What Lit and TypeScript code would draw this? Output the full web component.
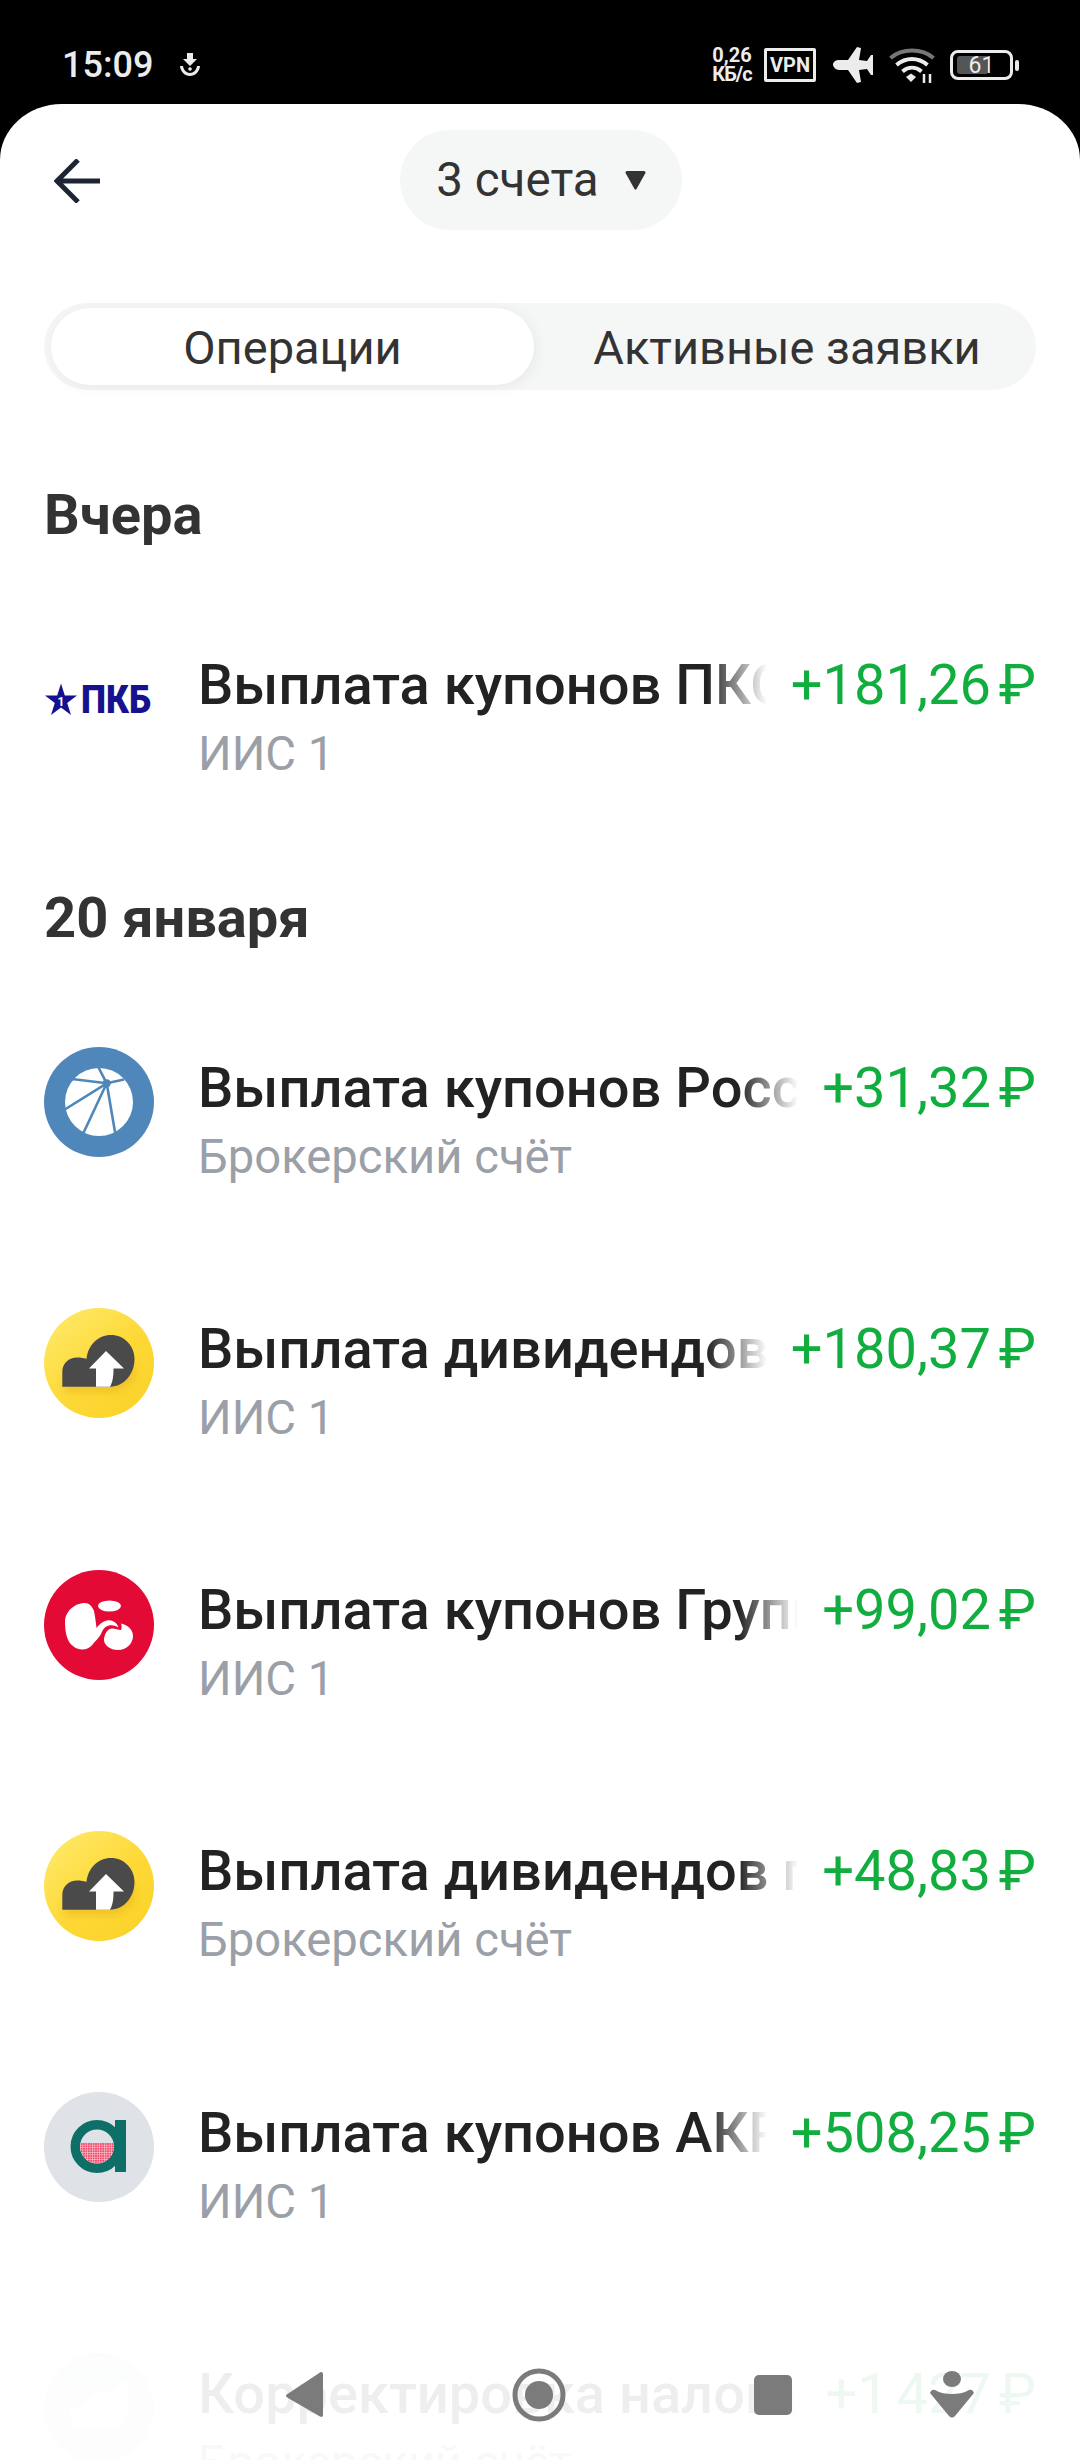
import { LitElement, html, css, svg } from "lit";
import { customElement } from "lit/decorators.js";

const rosseti = svg`<svg viewBox="0 0 110 110" class="logo"><circle cx="55" cy="55" r="55" fill="#5087bb"/><circle cx="55" cy="55" r="34" fill="#fff"/><g stroke="#5087bb" stroke-width="2.6" fill="none"><path d="M62.7 36.3 54.3 20M62.7 36.3 28 32M62.7 36.3 20 63M62.7 36.3 38.5 88M62.7 36.3 71 85M62.7 36.3 80 32.5"/></g><circle cx="62.7" cy="36.3" r="4" fill="#5087bb"/></svg>`;

const cloud = svg`<svg viewBox="0 0 110 110" class="logo"><defs><linearGradient id="yg" x1="0.1" y1="0.1" x2="0.8" y2="0.9"><stop offset="0" stop-color="#ffe866"/><stop offset="0.6" stop-color="#fdd835"/><stop offset="1" stop-color="#fbd32c"/></linearGradient><filter id="bl"><feGaussianBlur stdDeviation="4"/></filter></defs><circle cx="55" cy="55" r="55" fill="url(#yg)"/><path d="M20 84H72L90 72V55L60 50 20 70Z" fill="#e0a91c" opacity=".45" filter="url(#bl)"/><path d="M18.3 78.7V64C18.3 55 25 49.5 33 49.5 37 49.5 40 50 42.5 51 44 37 54 27 67 27 80 27 90.5 37.5 90.5 51 90.5 66 80 78.7 66 78.7Z" fill="#4a4a4a"/><path d="M62 43 45 60.5H52V78.7H66C69 74 69.5 67 69.5 60.5H80Z" fill="#fff"/></svg>`;

const red = svg`<svg viewBox="0 0 110 110" class="logo"><circle cx="55" cy="55" r="55" fill="#e30b35"/><g fill="#fff"><path d="M41 33C30 33 21 42 21 52 21 62 23 72 29 76 34 81 44 81 49 74 51 71 55 68 57 64 58.500 60 60.500 56.500 65 55.500 68 54.800 71 55.500 74.500 57.500 73 52.500 68 49.500 63 50.500 58 51.500 55 55 52.500 58 52 53 51 46 50 41 48 36 45 33 41 33Z"/><ellipse cx="65.500" cy="36" rx="11.500" ry="5.500"/><path d="M60 69C60.500 64 63 59.500 67.500 58.500 71 58 74 60 76.500 60 78 59.500 78 56.500 77 53.500 84 55 89 60 89 66 89 74 82 80 74 80 66 80 59.500 75 60 69Z"/></g></svg>`;

const akra = svg`<svg viewBox="0 0 110 110" class="logo"><defs><pattern id="dots" width="2.4" height="2.4" patternUnits="userSpaceOnUse"><rect width="2.4" height="2.4" fill="#ee4a68"/><rect width="2.4" height=".6" fill="#ffc8d2"/><rect width=".6" height="2.4" fill="#ffc8d2"/></pattern><clipPath id="half"><rect x="0" y="51" width="110" height="60"/></clipPath></defs><circle cx="55" cy="55" r="55" fill="#dfe2e7"/><rect x="71" y="28" width="11" height="52" fill="#0e6e68"/><circle cx="53" cy="54.500" r="21.700" fill="none" stroke="#0e6e68" stroke-width="9.500"/><circle cx="53" cy="54.500" r="17" fill="url(#dots)" clip-path="url(#half)"/></svg>`;

const pkb = svg`<svg viewBox="0 0 110 110" class="logo"><path d="M17 10.500 20.800 22.500H33L23.200 30 27 42 17 34.500 7 42 10.800 30 1 22.500H13.200Z" transform="translate(0,29)" fill="#16118e"/><text x="17" y="62" class="pkb-one" text-anchor="middle">1</text><text x="37" y="69" class="pkb-text" textLength="70" lengthAdjust="spacingAndGlyphs">ПКБ</text></svg>`;

const check = svg`<svg viewBox="0 0 110 110" class="logo"><circle cx="55" cy="55" r="55" fill="#e3e6ea"/><path d="M24 52 34 55 55 38 60 42 85 26 83 68 70 76H30Z" fill="#fff"/></svg>`;

type Row = { logo: unknown; title: string; sub: string; amount: string };

@customElement("app-root")
export class AppRoot extends LitElement {
  static styles = css`
    :host { display: block; width: 1080px; height: 2460px; position: relative; overflow: hidden; background: #000; font-family: Roboto, "Noto Sans", sans-serif; color: #2b2b2b; }
    .status { height: 104px; display: flex; align-items: center; justify-content: space-between; padding: 26px 61px 0 62px; box-sizing: border-box; color: #ececec; }
    .status-left { display: flex; align-items: center; gap: 24px; font-size: 36px; font-weight: 500; }
    .status-right { display: flex; align-items: center; }
    .speed { font-size: 20px; line-height: 19px; font-weight: 700; text-align: center; width: 42px; white-space: nowrap; }
    .speed-unit { display: block; letter-spacing: -1px; }
    .vpn { width: 52px; height: 34px; border: 3px solid #ececec; border-radius: 2px; box-sizing: border-box; font-size: 20px; font-weight: 700; display: flex; align-items: center; justify-content: center; margin-left: 11px; }
    .plane { margin-left: 17px; display: block; }
    .wifi { margin-left: 16px; display: block; }
    .bat { margin-left: 15px; width: 63px; height: 30px; border: 3px solid #ececec; border-radius: 8px; box-sizing: border-box; position: relative; display: flex; align-items: center; justify-content: center; font-size: 23px; }
    .bat span { position: relative; }
    .bat::before { content: ""; position: absolute; left: 4px; top: 3px; bottom: 3px; width: 30px; background: #555; border-radius: 3px 0 0 3px; }
    .bat-tip { width: 4px; height: 11px; background: #ececec; border-radius: 2px; margin-left: 2px; }
    .sheet { background: #fff; height: 2356px; border-radius: 62px 62px 0 0 / 56px 56px 0 0; overflow: hidden; }
    .top { height: 152px; display: flex; align-items: center; justify-content: center; position: relative; }
    .back { position: absolute; left: 54px; top: 55px; display: block; }
    .account { width: 282px; height: 100px; margin-left: 2px; border-radius: 50px; background: #f5f6f6; display: flex; align-items: center; justify-content: center; gap: 26px; font-size: 47.500px; color: #333; }
    .caret { display: block; }
    .tabs { margin: 47px 44px 0; height: 87px; border-radius: 44px; background: #f5f6f6; display: flex; padding: 5px 8px 5px 7px; box-sizing: border-box; font-size: 47px; color: #333; align-items: stretch; }
    .tab { flex: none; display: flex; align-items: center; justify-content: center; padding-top: 2px; box-sizing: border-box; }
    .tab.on { width: 483px; background: #fff; border-radius: 39px; box-shadow: 2px 2px 14px rgba(0,0,0,.06); }
    .tab.off { flex: 1; padding-left: 12px; }
    .section { margin: 0 0 0 44px; font-size: 56px; font-weight: 700; color: #333; height: 72px; line-height: 72px; }
    .s1 { margin-top: 89px; }
    .list { display: flex; flex-direction: column; }
    .list-a { padding-top: 93px; }
    .list-b { padding-top: 93px; }
    .row { height: 261.250px; padding: 0 44px; box-sizing: border-box; display: flex; align-items: flex-start; }
    .row-a { height: 238px; }
    .logo { width: 110px; height: 110px; display: block; flex: none; }
    .pkb-text { font-family: Roboto, sans-serif; font-size: 38px; font-weight: 900; fill: #16118e; }
    .pkb-one { font-family: Roboto, sans-serif; font-size: 12px; font-weight: 700; fill: #fff; }
    .body { flex: 1; min-width: 0; margin-left: 44px; padding-top: 6.500px; }
    .line { display: flex; align-items: center; height: 68px; }
    .title { flex: 1; min-width: 0; white-space: nowrap; overflow: hidden; font-size: 56px; font-weight: 500; color: #222; line-height: 68px;
      -webkit-mask-image: linear-gradient(to left, transparent 0, #000 60px); mask-image: linear-gradient(to left, transparent 0, #000 60px); }
    .amount { flex: none; margin-left: 24px; font-size: 56px; color: #12ad3f; white-space: nowrap; line-height: 68px; word-spacing: -6px; }
    .sub { font-size: 47.200px; color: #9a9fa8; margin-top: 7px; height: 56px; line-height: 56px; }
    .fade { position: absolute; left: 0; right: 0; top: 2220px; bottom: 0; background: linear-gradient(to bottom, rgba(255,255,255,0) 0, rgba(255,255,255,.92) 58%, rgba(255,255,255,.93) 100%); pointer-events: none; }
    .nav { position: absolute; left: 0; top: 2360px; display: block; }
  `;

  render() {
    const rowsA: Row[] = [{ logo: pkb, title: "Выплата купонов ПКО ПКБ", sub: "ИИС 1", amount: "+181,26 ₽" }];
    const rowsB: Row[] = [
      { logo: rosseti, title: "Выплата купонов Россети Ленэнерго", sub: "Брокерский счёт", amount: "+31,32 ₽" },
      { logo: cloud, title: "Выплата дивидендов Новатэк", sub: "ИИС 1", amount: "+180,37 ₽" },
      { logo: red, title: "Выплата купонов Группа Самолёт", sub: "ИИС 1", amount: "+99,02 ₽" },
      { logo: cloud, title: "Выплата дивидендов по акциям", sub: "Брокерский счёт", amount: "+48,83 ₽" },
      { logo: akra, title: "Выплата купонов АКРА Финанс", sub: "ИИС 1", amount: "+508,25 ₽" },
      { logo: check, title: "Корректировка налога за период", sub: "Брокерский счёт", amount: "+1 427 ₽" },
    ];
    const row = (r: Row, extra = "") => html`<div class="row ${extra}">
      ${r.logo}
      <div class="body">
        <div class="line"><div class="title">${r.title}</div><div class="amount">${r.amount}</div></div>
        <div class="sub">${r.sub}</div>
      </div>
    </div>`;
    return html`
      <div class="status">
        <div class="status-left">
          <span>15:09</span>
          <svg width="26" height="26" viewBox="0 0 26 26" fill="#ececec"><path d="M10 1h6v6h4l-7 7-7-7h4z"/><circle cx="13" cy="17" r="1.800"/><path d="M3 14c.5 6 5 10 10 10s9.500-4 10-10h-3c-.5 4-3.500 7-7 7s-6.500-3-7-7z"/></svg>
        </div>
        <div class="status-right">
          <div class="speed">0,26<span class="speed-unit">КБ/с</span></div>
          <div class="vpn">VPN</div>
          <svg class="plane" width="40" height="36" viewBox="0 0 40 36" fill="#ececec"><path d="M0 17.500C0 15 3 13 6 13H15L24 0 28 1 26 13 34 14 38 8H40V28H38L34 22 26 23 28 35 24 36 15 23H6C3 23 0 20 0 17.500Z"/></svg>
          <svg class="wifi" width="46" height="35" viewBox="0 0 46 35" fill="none" stroke-linecap="butt"><path d="M1.500 10C13 0 33 0 44.500 10" stroke="#777" stroke-width="4"/><path d="M7.500 17C17 9 29 9 38.500 17" stroke="#ececec" stroke-width="4"/><path d="M13.500 23.500c6-5 13-5 19 0" stroke="#ececec" stroke-width="4"/><path d="M17 29l5-3.500 5 3.500-5 5z" fill="#ececec"/><path d="M35 26v9M41 26v9" stroke="#ececec" stroke-width="2.500"/></svg>
          <div class="bat"><span>61</span></div>
          <div class="bat-tip"></div>
        </div>
      </div>
      <div class="sheet">
        <div class="top">
          <svg class="back" width="48" height="44" viewBox="0 0 48 44" fill="none" stroke="#1d2433" stroke-width="5"><path d="M46 22H3M24 1 3 22l21 21"/></svg>
          <div class="account">
            <span>3 счета</span>
            <svg class="caret" width="21" height="22" viewBox="0 0 21 22"><path d="M2 2h17a1.500 1.500 0 0 1 1.300 2.200L11.500 20a1.200 1.200 0 0 1-2 0L.7 4.200A1.500 1.500 0 0 1 2 2z" fill="#333"/></svg>
          </div>
        </div>
        <div class="tabs">
          <div class="tab on">Операции</div>
          <div class="tab off">Активные заявки</div>
        </div>
        <div class="section s1">Вчера</div>
        <div class="list list-a">${rowsA.map((r) => row(r, "row-a"))}</div>
        <div class="section">20 января</div>
        <div class="list list-b">${rowsB.map((r) => row(r))}</div>
      </div>
      <div class="fade"></div>
      <svg class="nav" width="1080" height="70" viewBox="0 2360 1080 70" fill="#7b7b7b">
        <path d="M286 2395 320 2372.500c2-1 3 0 3 2v40c0 2-1 3-3 2L288 2398c-2-1-2-2-2-3z"/>
        <circle cx="539" cy="2395" r="24" fill="none" stroke="#7b7b7b" stroke-width="5"/>
        <circle cx="539" cy="2395" r="14"/>
        <rect x="754" y="2375" width="38" height="40" rx="5"/>
        <ellipse cx="952" cy="2379" rx="9" ry="8"/>
        <path d="M930 2393c1-3 3-4 5-3 5 3 11 4 17 4s12-1 17-4c2-1 4 0 5 3l-19 23c-2 2-4 2-6 0z"/>
      </svg>
    `;
  }
}
